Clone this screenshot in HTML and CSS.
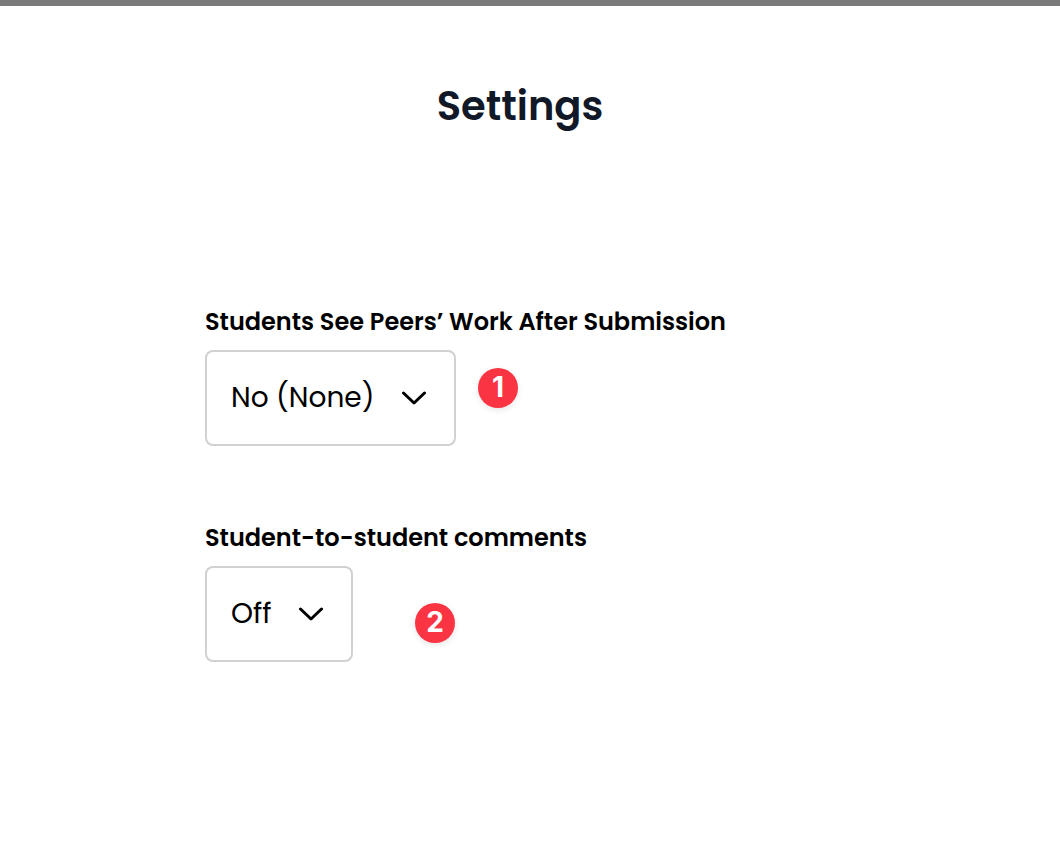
FILE: index.html
```
<!DOCTYPE html>
<html lang="en">
<head>
    <meta charset="utf-8">
    <title>Settings</title>
    <meta name="viewport" content="width=device-width, initial-scale=1">
    <link rel="stylesheet" href="styles.css">
</head>
<body>
    <main class="settings">
        <h1>Settings</h1>
        <form class="fields">
            <div class="field">
                <label for="peerWork">Students See Peers’ Work After Submission</label>
                <div class="field-row">
                    <div class="select-box peer-work">
                        <select id="peerWork" name="peerWork">
                            <option>No (None)</option>
                        </select>
                        <svg class="chevron" viewBox="0 0 24 14" aria-hidden="true"><path d="M1.5 2 12 12 22.5 2"/></svg>
                    </div>
                    <span class="step step-one">1</span>
                </div>
            </div>
            <div class="field">
                <label for="comments">Student-to-student comments</label>
                <div class="field-row">
                    <div class="select-box comments">
                        <select id="comments" name="comments">
                            <option>Off</option>
                        </select>
                        <svg class="chevron" viewBox="0 0 24 14" aria-hidden="true"><path d="M1.5 2 12 12 22.5 2"/></svg>
                    </div>
                    <span class="step step-two">2</span>
                </div>
            </div>
        </form>
    </main>
</body>
</html>
```
FILE: styles.css
```
* {
    box-sizing: border-box;
}
body {
    margin: 0;
    min-height: 100vh;
    border-top: 6px solid #7a7a7a;
    background: #fff;
    color: #000;
    font-family: Poppins, Inter, sans-serif;
}
.settings {
    max-width: 650px;
    margin: 0 auto;
    padding: 70px 0 64px;
}
h1 {
    margin: 0 20px 168px 0;
    font-size: 40px;
    line-height: 60px;
    font-weight: 600;
    color: #111827;
    text-align: center;
}
.fields {
    display: flex;
    flex-direction: column;
    gap: 74px;
}
.field label {
    display: block;
    margin-bottom: 10px;
    font-size: 24px;
    line-height: 36px;
    font-weight: 600;
}
.field-row {
    display: flex;
    align-items: flex-start;
}
.select-box {
    position: relative;
}
.peer-work {
    width: 251px;
}
.comments {
    width: 148px;
}
select {
    appearance: none;
    display: block;
    width: 100%;
    height: 96px;
    padding: 0 56px 2px 24px;
    border: 2px solid #d1d1d1;
    border-radius: 8px;
    background: #fff;
    color: #000;
    font-family: inherit;
    font-size: 28px;
    cursor: pointer;
}
.chevron {
    position: absolute;
    top: 41px;
    right: 30px;
    width: 24px;
    height: 14px;
    fill: none;
    stroke: #000;
    stroke-width: 3;
    stroke-linecap: round;
    stroke-linejoin: round;
    pointer-events: none;
}
.step {
    width: 40px;
    height: 40px;
    border-radius: 50%;
    background: #fb3444;
    box-shadow: 0 2px 6px rgba(0, 0, 0, 0.1);
    color: #fff;
    font-family: Inter, sans-serif;
    font-size: 28px;
    line-height: 38px;
    font-weight: 700;
    text-align: center;
}
.step-one {
    margin: 18px 0 0 22px;
}
.step-two {
    margin: 37px 0 0 62px;
}
```
